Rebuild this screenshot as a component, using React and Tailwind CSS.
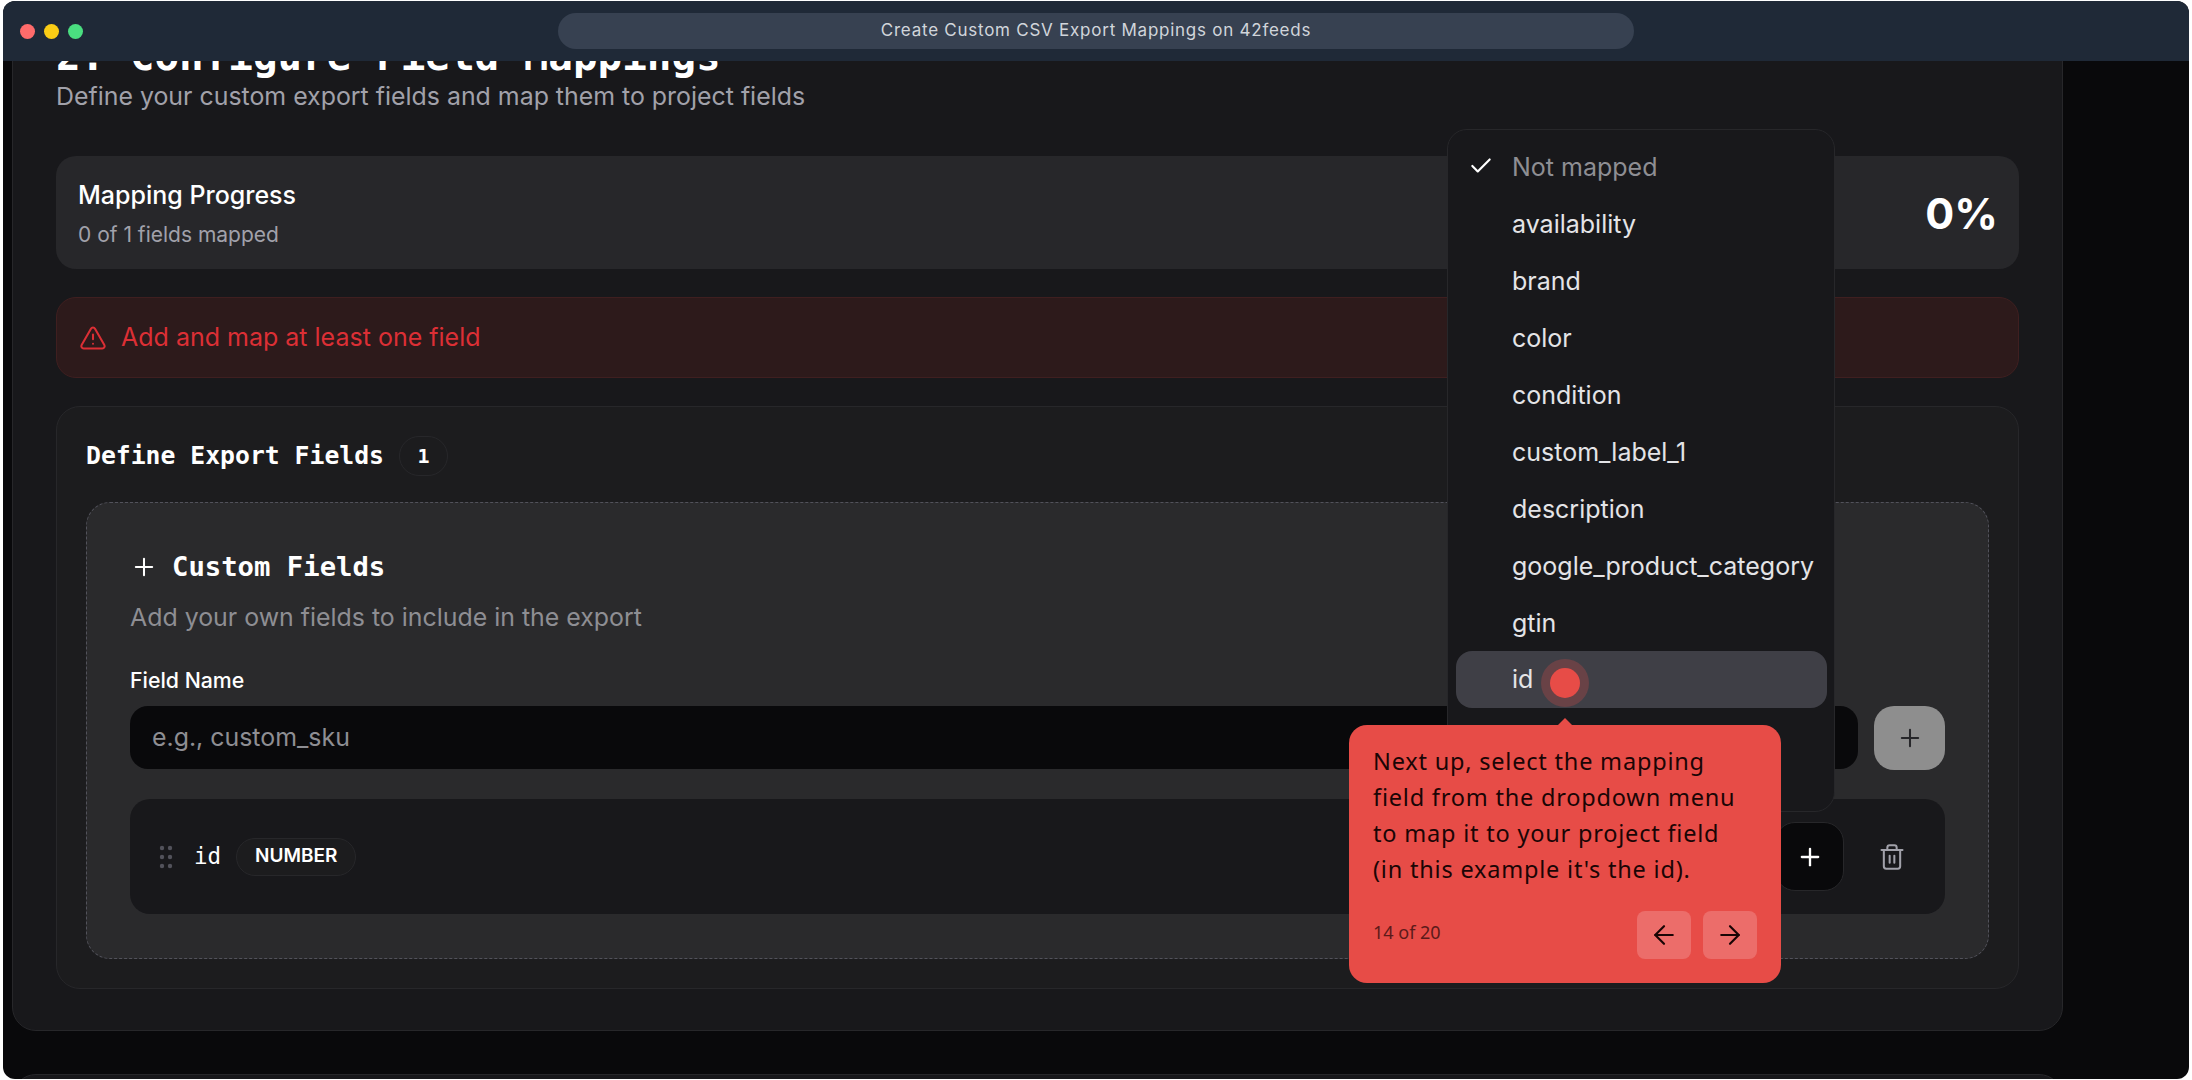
import React from "react";
import { Check, Plus, Trash2, ArrowLeft, ArrowRight, TriangleAlert } from "lucide-react";

const inter = "font-['Inter',sans-serif]";
const mono = "font-['DejaVu_Sans_Mono',monospace]";
const items = ["availability", "brand", "color", "condition", "custom_label_1", "description", "google_product_category", "gtin"];

function Grip() {
  return (
    <svg width="14" height="24" viewBox="0 0 14 24" className="text-[#52525b]" fill="currentColor">
      {[3, 12, 21].map((y) => (
        <g key={y}>
          <circle cx="3" cy={y} r="2.2" />
          <circle cx="11" cy={y} r="2.2" />
        </g>
      ))}
    </svg>
  );
}

export default function App() {
  return (
    <div className={`w-[2192px] h-[1080px] bg-white pt-px pl-[3px] overflow-hidden ${inter}`}>
      <div className="relative w-[2186px] h-[1078px] rounded-[12px] overflow-hidden bg-[#09090b] flex flex-col">
        <header className="relative z-20 h-[60px] shrink-0 bg-[#1f2937] flex items-center pl-[17px]">
          <div className="flex gap-[9px]">
            <span className="w-[15px] h-[15px] rounded-full bg-[#ff6b6b]" />
            <span className="w-[15px] h-[15px] rounded-full bg-[#facc15]" />
            <span className="w-[15px] h-[15px] rounded-full bg-[#4ade80]" />
          </div>
          <div className="ml-[475px] w-[1076px] h-[36px] rounded-[18px] bg-[#374151] flex items-center justify-center text-[17px] tracking-[0.75px] text-[#d1d5db]">
            Create Custom CSV Export Mappings on 42feeds
          </div>
        </header>

        <main className="flex-1 overflow-hidden pl-[9px]">
          <section className="w-[2051px] -mt-[30px] rounded-[24px] border border-[#27272a] bg-[#18181b] px-[43px] pb-[41px]">
            <h2 className={`${mono} text-[40.9px] leading-[48px] font-bold text-white`}>2. Configure Field Mappings</h2>
            <p className="text-[24.9px] leading-[32px] text-[#a1a1aa]">Define your custom export fields and map them to project fields</p>

            <div className="mt-[44px] flex flex-col gap-[28px]">
              <div className="h-[113px] rounded-[20px] bg-[#27272a] px-[22px] pr-[21px] flex justify-between items-center">
                <div className="mt-[2px]">
                  <div className="text-[25px] leading-[32px] font-medium text-white">Mapping Progress</div>
                  <div className="mt-[10px] text-[21px] leading-[28px] text-[#a1a1aa]">0 of 1 fields mapped</div>
                </div>
                <div className="text-[43px] leading-[52px] font-bold text-white">0%</div>
              </div>

              <div className="h-[81px] rounded-[20px] border border-[#3f1f20] bg-[#2d1a1b] px-[22px] flex items-center gap-[14px] text-[#dc2f35]">
                <TriangleAlert size={28} strokeWidth={1.75} />
                <span className="text-[25px]">Add and map at least one field</span>
              </div>

              <div className="h-[583px] rounded-[24px] border border-[#27272a] bg-[#1c1c1e] px-[29px] pt-[29px]">
                <div className="h-[40px] flex items-center gap-[15px]">
                  <h3 className={`${mono} text-[24.75px] font-bold text-white`}>Define Export Fields</h3>
                  <span className={`${mono} w-[49px] h-[40px] rounded-full border border-[#27272a] flex items-center justify-center text-[20px] font-bold text-white`}>1</span>
                </div>

                <div className="mt-[26px] h-[457px] rounded-[24px] border border-dashed border-[#52525b] bg-[#2a2a2c] px-[43px] pt-[47px]">
                  <div className="h-[34px] flex items-center gap-[14px] text-white">
                    <Plus size={28} strokeWidth={1.75} />
                    <h4 className={`${mono} text-[27.25px] font-bold`}>Custom Fields</h4>
                  </div>
                  <p className="mt-[17px] text-[24.9px] leading-[32px] text-[#8e8e93]">Add your own fields to include in the export</p>
                  <div className="mt-[33px] text-[21.3px] leading-[28px] font-medium text-white">Field Name</div>
                  <div className="mt-[12px] flex gap-[16px]">
                    <div className="w-[1729px] h-[63px] rounded-[18px] bg-[#09090b] px-[22px] flex items-center text-[24.9px] text-[#8e8e93]">e.g., custom_sku</div>
                    <button className="w-[71px] h-[64px] rounded-[20px] bg-[#8e8e8e] flex items-center justify-center text-[#27272a]">
                      <Plus size={28} strokeWidth={1.75} />
                    </button>
                  </div>
                  <div className="mt-[29px] h-[115px] rounded-[20px] bg-[#18181b] pl-[29px] pr-[39px] flex items-center justify-between">
                    <div className="flex items-center">
                      <Grip />
                      <span className={`${mono} ml-[21px] text-[22.5px] text-white`}>id</span>
                      <span className="ml-[15px] h-[38px] px-[18px] rounded-full border border-[#27272a] bg-[#1c1c1e] flex items-center text-[19px] font-semibold text-white">NUMBER</span>
                    </div>
                    <div className="flex items-center gap-[34px]">
                      <button className="w-[69px] h-[69px] rounded-[20px] border border-[#27272a] bg-[#09090b] flex items-center justify-center text-white">
                        <Plus size={28} strokeWidth={2} />
                      </button>
                      <Trash2 size={28} strokeWidth={1.75} className="text-[#a1a1aa]" />
                    </div>
                  </div>
                </div>
              </div>
            </div>
          </section>

          <div className="mt-[43px] w-[2051px] h-[100px] rounded-[24px] border border-[#27272a] bg-[#18181b]" />
        </main>

        <div className="absolute left-[1444px] top-[128px] z-10 w-[388px] h-[683px] rounded-[20px] border border-[#27272a] bg-[#18181b] pl-[8px] pr-[7px] py-[8px] text-[25px]">
          <div className="h-[57px] pl-[56px] pt-[2px] relative flex items-center text-[#8e8e93]">
            <Check size={26} strokeWidth={2} className="absolute left-[12px] top-[15px] text-white" />
            Not mapped
          </div>
          {items.map((t) => (
            <div key={t} className="h-[57px] pl-[56px] pt-[2px] flex items-center text-[#e4e4e7]">{t}</div>
          ))}
          <div className="h-[57px] pl-[56px] rounded-[16px] bg-[#3f3f46] flex items-center text-[#e4e4e7]">id</div>
        </div>

        <div className="absolute left-[1538px] top-[658px] z-10 w-[48px] h-[48px] rounded-full bg-[#e74c47]/25 flex items-center justify-center">
          <span className="w-[30px] h-[30px] rounded-full bg-[#e74c47]" />
        </div>

        <div className="absolute left-[1346px] top-[724px] z-10 w-[432px] h-[258px] rounded-[18px] bg-[#e74c47] px-[24px] pt-[18px] font-['Noto_Sans',sans-serif] text-[#1a0505]">
          <span className="absolute left-[209px] -top-[7px] w-0 h-0 border-x-[7px] border-x-transparent border-b-[7px] border-b-[#e74c47]" />
          <p className="text-[23.5px] leading-[36px] tracking-[0.8px] w-[410px] whitespace-nowrap">
            Next up, select the mapping<br />field from the dropdown menu<br />to map it to your project field<br />(in this example it's the id).
          </p>
          <div className="mt-[24px] flex items-center justify-between">
            <span className="text-[18px] text-[#5c1a1a] -mt-[6px]">14 of 20</span>
            <div className="flex gap-[12px]">
              <button className="w-[54px] h-[48px] rounded-[8px] bg-[#ec6d6a] flex items-center justify-center"><ArrowLeft size={30} strokeWidth={1.75} /></button>
              <button className="w-[54px] h-[48px] rounded-[8px] bg-[#ec6d6a] flex items-center justify-center"><ArrowRight size={30} strokeWidth={1.75} /></button>
            </div>
          </div>
        </div>
      </div>
    </div>
  );
}
